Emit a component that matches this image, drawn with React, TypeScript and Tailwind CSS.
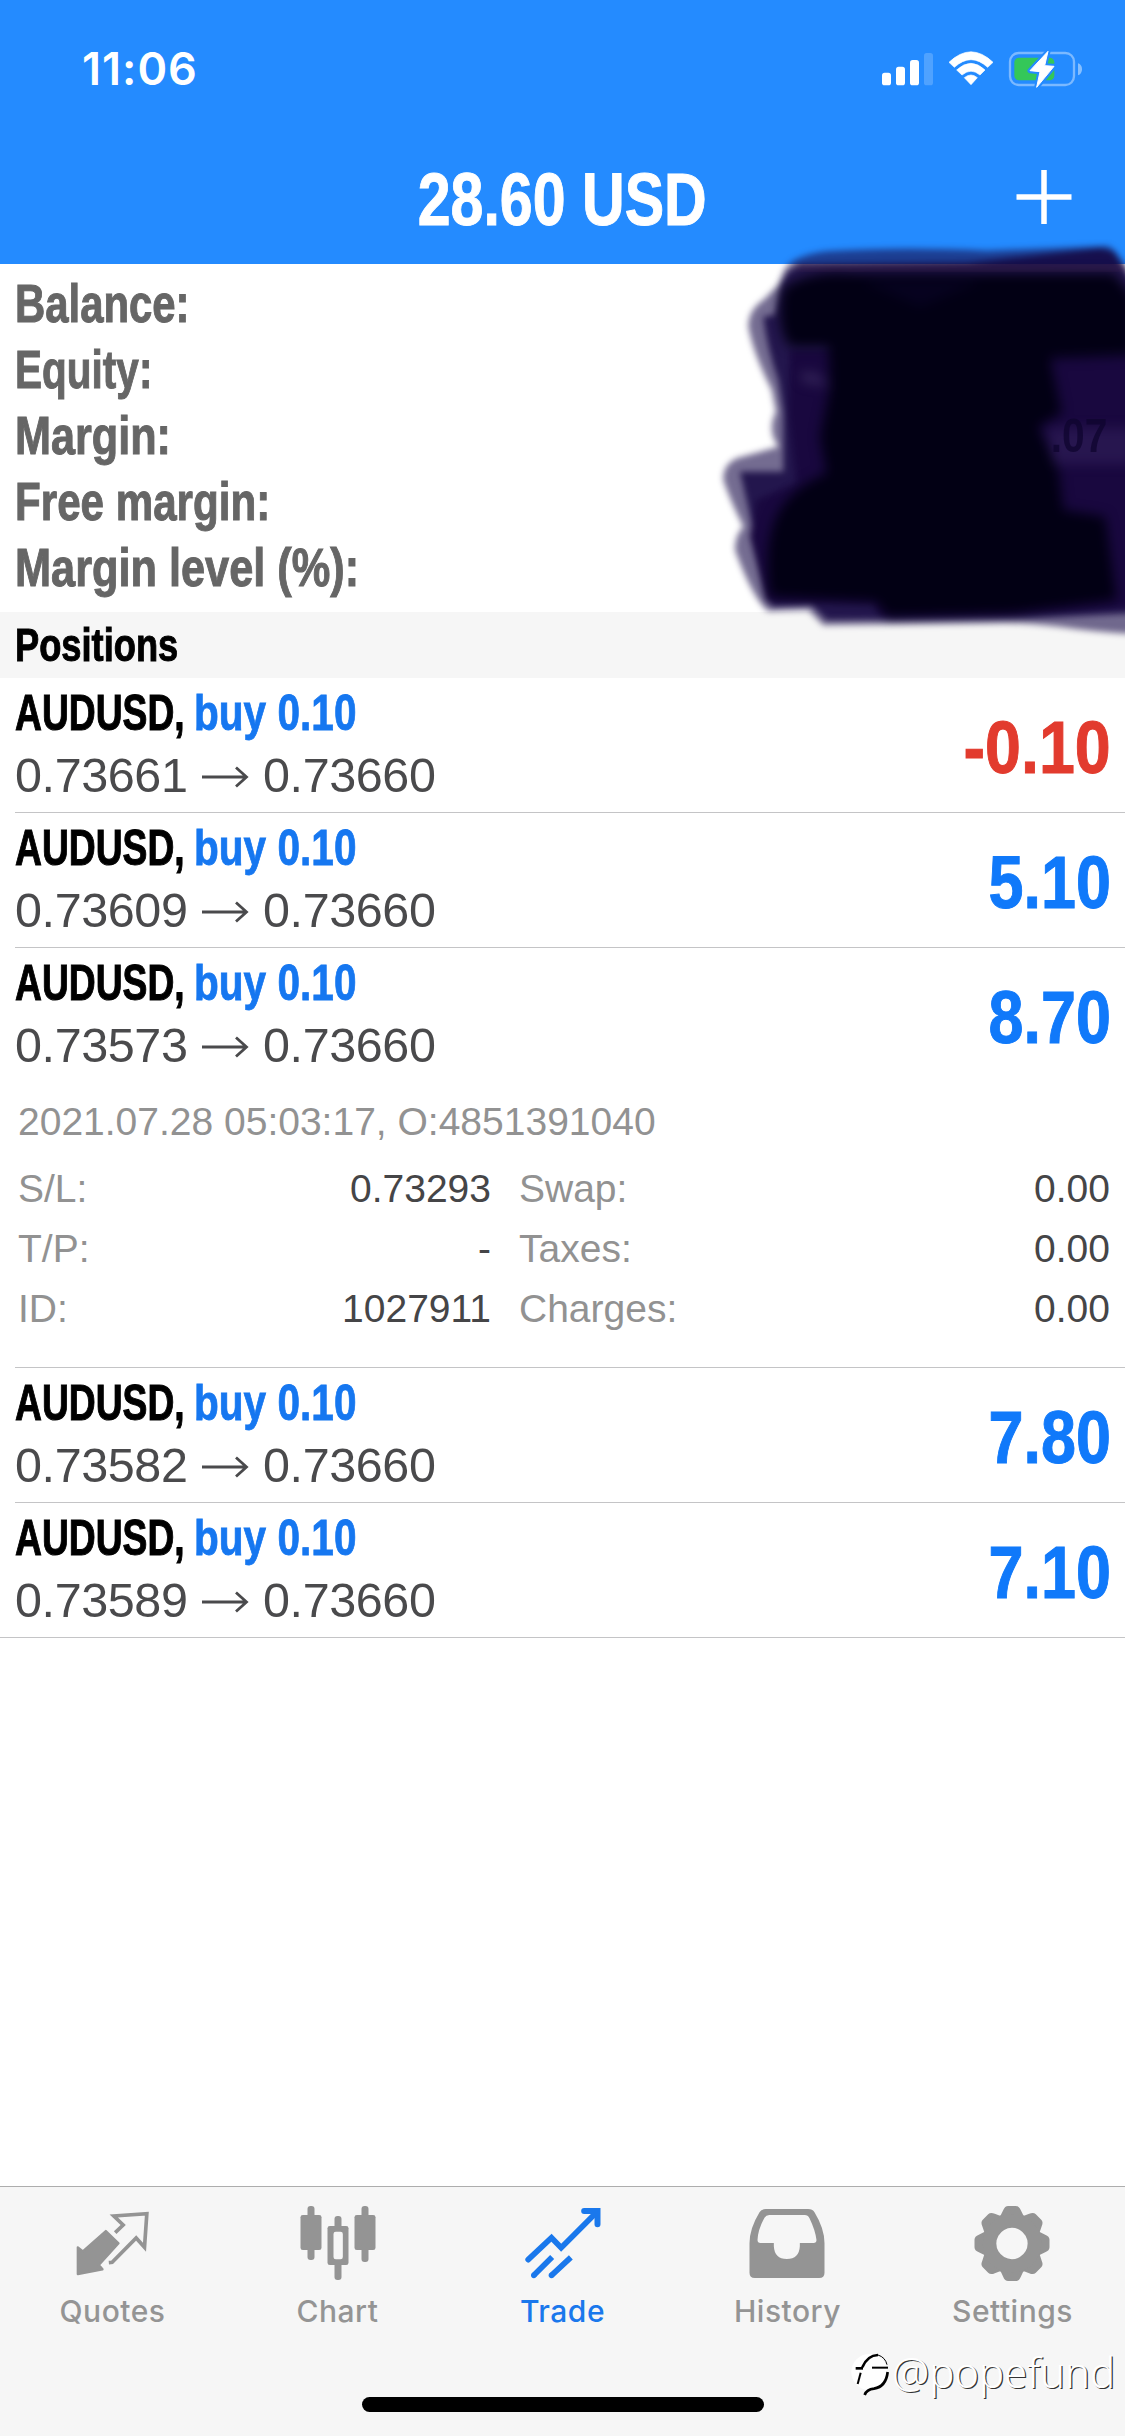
import type { ReactNode } from "react";
import clsx from "clsx";

type Position = {
  open: string;
  current: string;
  profit: string;
  details?: boolean;
};

const positions: Position[] = [
  { open: "0.73661", current: "0.73660", profit: "-0.10" },
  { open: "0.73609", current: "0.73660", profit: "5.10" },
  { open: "0.73573", current: "0.73660", profit: "8.70", details: true },
  { open: "0.73582", current: "0.73660", profit: "7.80" },
  { open: "0.73589", current: "0.73660", profit: "7.10" },
];

const summary = [
  { label: "Balance:", scale: "scale-x-[0.79]" },
  { label: "Equity:", scale: "scale-x-[0.765]" },
  { label: "Margin:", scale: "scale-x-[0.815]" },
  { label: "Free margin:", scale: "scale-x-[0.795]" },
  { label: "Margin level (%):", scale: "scale-x-[0.817]" },
];

const StatusIcons = () => (
  <svg className="h-[43px] w-[205px]" viewBox="90 51 615 129" fill="#fff">
    <rect x="96" y="128" width="27" height="38" rx="8" />
    <rect x="138" y="110" width="27" height="56" rx="8" />
    <rect x="180" y="90" width="27" height="76" rx="8" />
    <rect x="222" y="69" width="27" height="97" rx="8" opacity="0.2" />
    <path d="M297 97 Q363 34 429 97 L413 112 Q363 66 313 112 Z" strokeLinejoin="round" stroke="#fff" strokeWidth="2" />
    <path d="M320 120 Q363 80 405 120 L390 135 Q363 112 336 135 Z" strokeLinejoin="round" stroke="#fff" strokeWidth="2" />
    <path d="M343 143 Q363 127 382 143 L363 164 Z" strokeLinejoin="round" stroke="#fff" strokeWidth="2" />
    <rect x="480" y="69" width="192" height="96" rx="26" fill="none" stroke="#fff" strokeOpacity="0.4" strokeWidth="7" />
    <path d="M684 100 Q696 104 696 118 Q696 132 684 136 Z" opacity="0.45" />
    <rect x="493" y="83" width="120" height="68" rx="14" fill="#34c759" />
    <path d="M594 64 L540 122 L570 125 L560 172 L612 109 L584 107 Z" stroke="#248bff" strokeWidth="15" strokeLinejoin="round" />
    <path d="M594 64 L540 122 L570 125 L560 172 L612 109 L584 107 Z" stroke="#fff" strokeWidth="3" strokeLinejoin="round" />
  </svg>
);

const QuotesIcon = () => (
  <svg className="size-20" viewBox="217.5 66 240 240" fill="currentColor">
    <path
      d="M316 153 L354 190 L295 255 L306 268 L232 282 L232 202 L247 214 Z"
      stroke="currentColor"
      strokeWidth="7"
      strokeLinejoin="round"
    />
    <path
      d="M344 158 L368 135 L340 108 L439 101 L432 202 L407 174 L335 247 L325 248"
      fill="none"
      stroke="currentColor"
      strokeWidth="11"
    />
  </svg>
);

const ChartIcon = () => (
  <svg className="size-20" viewBox="892.5 66 240 240" fill="currentColor">
    <rect x="921" y="78" width="21" height="162" rx="9" />
    <rect x="900" y="105" width="63" height="105" rx="7" />
    <rect x="1083" y="78" width="21" height="168" rx="9" />
    <rect x="1062" y="105" width="63" height="105" rx="7" />
    <rect x="1002" y="108" width="21" height="192" rx="9" />
    <rect x="981" y="138" width="63" height="117" rx="7" />
    <rect x="999" y="155" width="28" height="83" rx="7" fill="#f6f6f6" />
  </svg>
);

const TradeIcon = () => (
  <svg className="size-20" viewBox="217.5 66 240 240" fill="none" stroke="currentColor" strokeWidth="17">
    <path d="M233 239 L303 173 L332 203 L436 99" strokeLinecap="round" strokeLinejoin="miter" />
    <path d="M401 93 H441 V133" strokeWidth="18" strokeLinecap="round" />
    <path d="M250 286 L305 231 M303 286 L361 232" />
    <circle cx="250" cy="286" r="8.5" fill="currentColor" stroke="none" />
    <circle cx="303" cy="286" r="8.5" fill="currentColor" stroke="none" />
  </svg>
);

const HistoryIcon = () => (
  <svg className="size-20" viewBox="892.5 66 240 240" fill="currentColor">
    <path
      fillRule="evenodd"
      d="M946 87 H1073 Q1086 87 1092 97 Q1122 146 1122 190 V278 Q1122 294 1106 294 H913 Q897 294 897 278 V190 Q897 146 927 97 Q933 87 946 87 Z M956 105 Q947 105 942 113 Q922 150 921 180 Q921 189 930 189 H970 V199 Q972 237 1009 237 Q1046 237 1048 199 V189 H1089 Q1098 189 1098 180 Q1094 150 1077 115 Q1072 105 1063 105 Z"
    />
  </svg>
);

const SettingsIcon = () => (
  <svg className="size-20" viewBox="397.5 66 240 240" fill="currentColor">
    {[0, 45, 90, 135, 180, 225, 270, 315].map((angle) => (
      <path
        key={angle}
        transform={`rotate(${angle} 514.5 190.5)`}
        d="M470 118 Q482 108 488 91 Q493 78 503 78 H526 Q536 78 541 91 Q547 108 559 118 Z"
      />
    ))}
    <path
      fillRule="evenodd"
      d="M514.5 103 a87.5 87.5 0 1 0 0.1 0 Z M514.5 143.5 a47 47 0 1 1 -0.1 0 Z"
    />
  </svg>
);

const tabs = [
  { label: "Quotes", icon: <QuotesIcon /> },
  { label: "Chart", icon: <ChartIcon /> },
  { label: "Trade", icon: <TradeIcon />, active: true },
  { label: "History", icon: <HistoryIcon /> },
  { label: "Settings", icon: <SettingsIcon /> },
];

const Scribble = () => (
  <svg className="absolute top-[230px] right-0 h-[420px] w-[425px]" viewBox="0 0 1275 1260">
    <defs>
      <filter id="soft" x="-10%" y="-10%" width="120%" height="120%" colorInterpolationFilters="sRGB">
        <feGaussianBlur stdDeviation="10" />
      </filter>
      <filter id="softer" x="-20%" y="-20%" width="140%" height="140%" colorInterpolationFilters="sRGB">
        <feGaussianBlur stdDeviation="17" />
      </filter>
    </defs>
    <g filter="url(#soft)">
      <path
        fill="#180a48"
        fillOpacity="0.6"
        d="M250 125 Q270 78 380 64 Q600 50 860 62 L1220 48 Q1250 52 1300 150 V1212 Q1180 1205 1080 1190 Q960 1175 860 1180 L370 1186 L325 1140 L205 1144 Q160 1110 105 960 Q105 915 130 890 Q90 810 70 750 Q68 705 110 685 L235 650 Q200 600 228 545 L215 480 Q160 370 145 290 Q145 240 190 210 L235 165 Z"
      />
      <path
        fill="#150842"
        fillOpacity="0.85"
        d="M265 125 L300 105 L800 98 L1200 55 L1240 65 L1300 160 V1150 L980 1165 L380 1170 L335 1125 L215 1130 Q195 1060 165 930 Q150 850 120 725 L250 725 L250 545 L235 450 Q200 350 190 260 L225 255 L245 160 Z"
      />
      <path
        fill="#19083f"
        d="M270 360 H1300 V1130 L930 1150 L540 1155 L520 1118 L200 1115 L150 920 L170 810 L290 760 L265 550 Z"
      />
    </g>
    <g filter="url(#softer)">
      <path
        fill="#020014"
        d="M250 175 Q330 120 450 130 L1240 130 L1300 200 V375 L1050 385 L1085 550 L1015 590 L1075 720 L1090 840 L1215 860 L1250 1110 L940 1150 L560 1160 L530 1115 L210 1100 Q190 960 225 870 Q260 780 380 730 L360 620 L390 470 L385 350 L270 350 Q225 290 250 175 Z"
      />
      <path fill="#4a3c6e" fillOpacity="0.5" d="M300 425 L350 430 L390 468 L310 458 Z" />
      <path fill="#35245f" fillOpacity="0.5" d="M1040 595 H1300 V702 H1060 Z" />
      <path fill="#0a0326" fillOpacity="0.6" d="M480 150 L850 150 L660 230 Z" />
    </g>
    <path fill="#3d2350" fillOpacity="0.45" filter="url(#soft)" d="M300 106 H850 L1270 104 V124 H290 Z" />
    <text
      x="1222"
      y="666"
      textAnchor="end"
      fontFamily="Liberation Sans"
      fontWeight="700"
      fontSize="142"
      textLength="170"
      lengthAdjust="spacingAndGlyphs"
      fill="#0e042e"
      opacity="0.75"
    >
      .07
    </text>
  </svg>
);

const Watermark = () => (
  <div className="absolute right-[10px] bottom-[34px] flex items-center">
    <svg className="h-[48px] w-[42px]" viewBox="10 55 126 144" fill="none">
      <circle cx="68" cy="118" r="54" fill="#fff" />
      <g stroke="#000" strokeWidth="8">
        <path d="M47 104 Q62 68 94 67" />
        <path d="M27 107 H49" />
        <path d="M76 105 H124" strokeWidth="6" />
        <path d="M94 67 Q116 74 121 96" strokeWidth="3" />
        <path d="M42 120 L33 154" strokeWidth="6" />
        <path d="M123 118 Q118 162 82 168 Q60 170 54 187" />
      </g>
    </svg>
    <span className="mb-[5px] font-['Noto_Sans',sans-serif] text-[42px] leading-[50px] font-light tracking-[-0.1px] text-white [text-shadow:1.2px_1px_0_#333]">
      @popefund
    </span>
  </div>
);

const PositionRow = ({ position, last }: { position: Position; last: boolean }) => (
  <div className={clsx("border-b border-[#c4c4c6]", last ? "pl-[15px]" : "ml-[15px]")}>
    <div className={clsx("flex justify-between pr-[14px]", position.details ? "h-[135px]" : "h-[134px]")}>
      <div>
        <div className="mt-px flex h-[67px] text-[50px] leading-[68px] font-bold whitespace-nowrap">
          <div className="w-[179px]">
            <span className="inline-block origin-left scale-x-[0.745] text-black [-webkit-text-stroke:1px_#000]">AUDUSD,</span>
          </div>
          <span className="inline-block origin-left scale-x-[0.812] text-[#1677f0] [-webkit-text-stroke:0.8px_#1677f0]">buy 0.10</span>
        </div>
        <div className="flex h-[58px] text-[48.5px] leading-[58px] tracking-[-0.4px] text-[#4a4a4c]">
          <div className="w-[187px]">{position.open}</div>
          <svg className="mt-[19px] h-6 w-[61px]" viewBox="0 0 61 24" fill="none" stroke="currentColor" strokeWidth="2.8">
            <path d="M0 12 H44 M34 2.5 L44.5 12 L34 21.5" />
          </svg>
          <div>{position.current}</div>
        </div>
      </div>
      <span
        className={clsx(
          "mt-[2px] inline-block origin-right text-[74px] leading-[135px] font-bold",
          position.profit.startsWith("-")
            ? "scale-x-[0.872] text-[#e23b2e] [-webkit-text-stroke:1px_#e23b2e]"
            : "scale-x-[0.85] text-[#1079fa] [-webkit-text-stroke:1px_#1079fa]",
        )}
      >
        {position.profit}
      </span>
    </div>
    {position.details && <PositionDetails />}
  </div>
);

const DetailCell = ({ label, children }: { label: string; children: ReactNode }) => (
  <div className="flex justify-between">
    <span>{label}</span>
    <span className="text-[#454547]">{children}</span>
  </div>
);

const PositionDetails = () => (
  <div className="pt-[2px] pr-[15px] pb-7 pl-[3px] text-[39px] text-[#929292]">
    <div className="h-[74px] leading-[74px]">2021.07.28 05:03:17, O:4851391040</div>
    <div className="grid grid-cols-[473px_1fr] gap-x-[28px] leading-[60px]">
      <DetailCell label="S/L:">0.73293</DetailCell>
      <DetailCell label="Swap:">0.00</DetailCell>
      <DetailCell label="T/P:">-</DetailCell>
      <DetailCell label="Taxes:">0.00</DetailCell>
      <DetailCell label="ID:">1027911</DetailCell>
      <DetailCell label="Charges:">0.00</DetailCell>
    </div>
  </div>
);

export default function App() {
  return (
    <div className="relative flex h-[2436px] w-[1125px] flex-col overflow-hidden bg-white font-['Liberation_Sans',sans-serif]">
      <header className="h-[264px] bg-[#248bff] text-white">
        <div className="flex h-[132px] items-start justify-between pr-10 pl-[82px]">
          <span className="mt-[41px] font-['Inter',sans-serif] text-[45px] leading-[56px] font-semibold tracking-[1px]">
            11:06
          </span>
          <div className="mt-[47px]">
            <StatusIcons />
          </div>
        </div>
        <div className="grid h-[132px] grid-cols-[1fr_auto_1fr] items-center">
          <span />
          <h1 className="mt-[2px] scale-x-[0.793] text-[74.5px] leading-[132px] font-bold [-webkit-text-stroke:1px_#fff]">
            28.60 USD
          </h1>
          <svg className="mr-[53px] mb-1 h-14 w-14 justify-self-end" viewBox="0 0 56 56" stroke="#fff" strokeWidth="5.5">
            <path d="M0.5 28 H55.5 M28 1 V55" />
          </svg>
        </div>
      </header>

      <section className="h-[348px] pt-[7px] pl-[15px] text-[53px] leading-[66px] font-bold text-[#666]">
        {summary.map(({ label, scale }) => (
          <div key={label}>
            <span className={clsx("inline-block origin-left [-webkit-text-stroke:1px_#666]", scale)}>{label}</span>
          </div>
        ))}
      </section>

      <h2 className="h-[66px] bg-[#f6f6f6] pl-[15px] text-[46.5px] leading-[66px] font-bold text-black">
        <span className="inline-block origin-left scale-x-[0.78] [-webkit-text-stroke:1px_#000]">Positions</span>
      </h2>

      <main className="flex-1">
        {positions.map((position, i) => (
          <PositionRow key={position.open} position={position} last={i === positions.length - 1} />
        ))}
      </main>

      <nav className="flex h-[250px] flex-col justify-between border-t border-[#adadad] bg-[#f6f6f6] pt-[15px] pb-6">
        <div className="grid grid-cols-5">
          {tabs.map(({ label, icon, active }) => (
            <div key={label} className={clsx("flex flex-col items-center", active ? "text-[#1a78ec]" : "text-[#949494]")}>
              {icon}
              <span className="mt-[10px] font-['Inter',sans-serif] text-[30px] leading-[38px] font-medium tracking-[0.5px]">
                {label}
              </span>
            </div>
          ))}
        </div>
        <div className="h-[15px] w-[402px] self-center rounded-full bg-black" />
      </nav>

      <Scribble />
      <Watermark />
    </div>
  );
}
